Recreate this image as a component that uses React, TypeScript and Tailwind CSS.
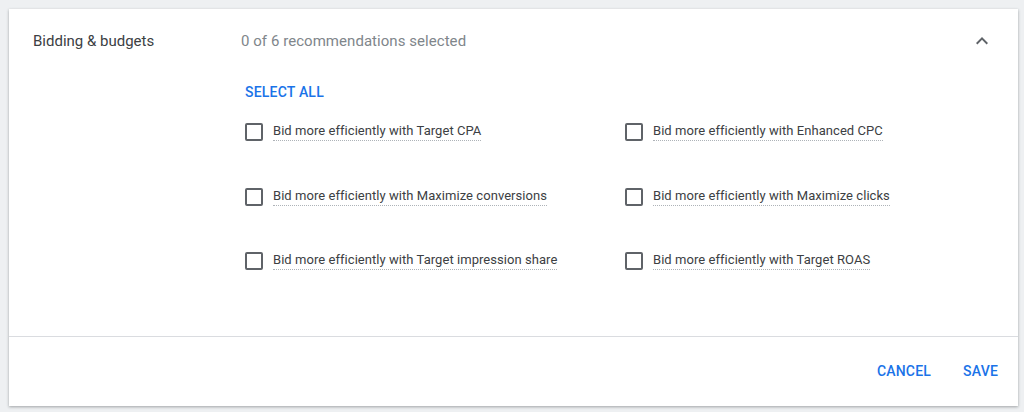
const left = [
  "Bid more efficiently with Target CPA",
  "Bid more efficiently with Maximize conversions",
  "Bid more efficiently with Target impression share",
];
const right = [
  "Bid more efficiently with Enhanced CPC",
  "Bid more efficiently with Maximize clicks",
  "Bid more efficiently with Target ROAS",
];

const Option = ({ label }: { label: string }) => (
  <label className="flex items-center h-6 cursor-pointer">
    <span className="w-[18px] h-[18px] border-2 border-[#5f6368] rounded-[2px] shrink-0" />
    <span className="ml-[10px] text-[13px] tracking-[0.05px] leading-4 text-[#3c4043] pb-[1px] border-b border-dotted border-[#aeb3b8]">
      {label}
    </span>
  </label>
);

export default function App() {
  const rows = left.map((l, i) => [l, right[i]]);

  return (
    <div className="w-[1024px] h-[412px] bg-[#eef0f2] pl-[9px] pr-[6px] pt-[9px] font-['Roboto',sans-serif]">
      <div className="h-[397px] bg-white flex flex-col shadow-[0_1px_3px_rgba(60,64,67,0.3),0_1px_2px_rgba(60,64,67,0.15)]">
        {/* Header */}
        <div className="flex items-center pt-[20px] pl-6 pr-[24px]">
          <div className="w-[208px] text-[15px] leading-5 text-[#3c4043]">Bidding &amp; budgets</div>
          <div className="flex-1 text-[15px] tracking-[0.05px] leading-5 text-[#80868b]">0 of 6 recommendations selected</div>
          <svg viewBox="0 0 24 24" className="w-6 h-6 fill-[#5f6368]">
            <path d="M12 8l-6 6 1.41 1.41L12 10.83l4.59 4.58L18 14z" />
          </svg>
        </div>

        {/* Body */}
        <div className="pl-[236px] mt-[27px]">
          <button className="text-[14px] leading-5 font-medium text-[#1a73e8] tracking-[0.2px]">SELECT ALL</button>
          <div className="mt-[16px] flex flex-col gap-y-[40.5px]">
            {rows.map(([a, b]) => (
              <div key={a} className="grid grid-cols-[380px_1fr]">
                <Option label={a} />
                <Option label={b} />
              </div>
            ))}
          </div>
        </div>

        <div className="flex-1" />

        {/* Footer */}
        <div className="h-[70px] border-t border-[#dadce0] flex items-center justify-end gap-8 pr-5">
          <button className="text-[14px] font-medium text-[#1a73e8] tracking-[0.2px]">CANCEL</button>
          <button className="text-[14px] font-medium text-[#1a73e8] tracking-[0.2px]">SAVE</button>
        </div>
      </div>
    </div>
  );
}
